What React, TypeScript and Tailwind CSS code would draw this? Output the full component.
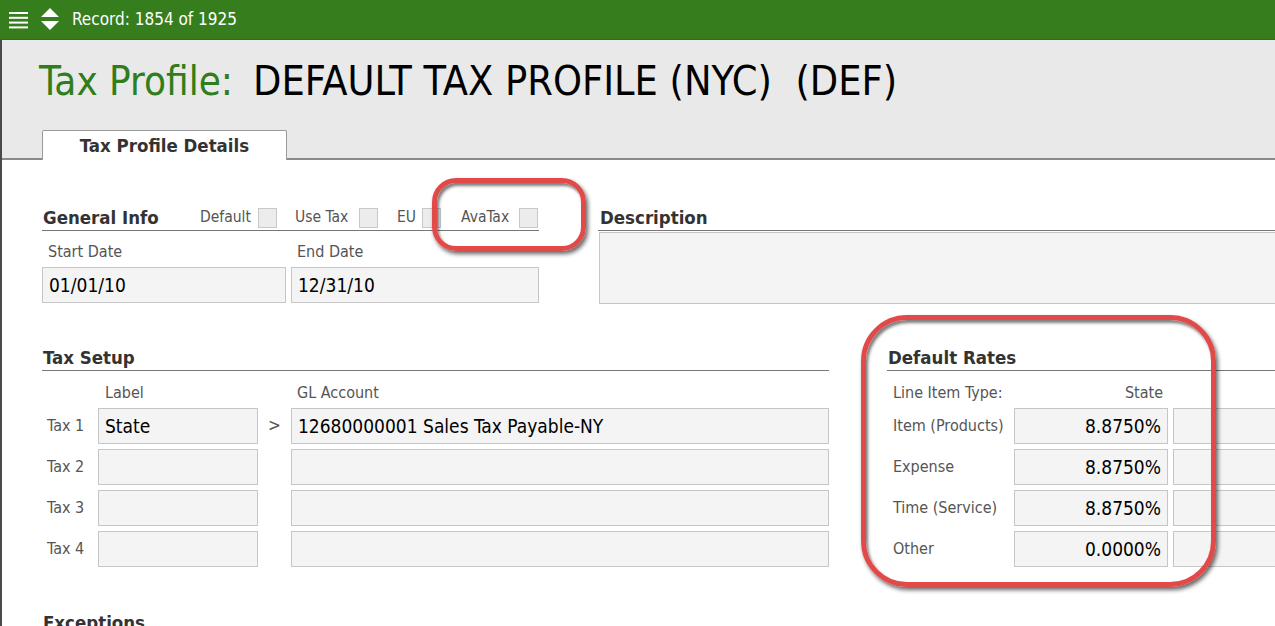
import React from "react";

const FONT = { fontFamily: '"DejaVu Sans Condensed", "DejaVu Sans", Tahoma, sans-serif' };

/* ── small pieces ─────────────────────────────────────────── */

function Field({ w, value, right }: { w: string; value?: string; right?: boolean }) {
  return (
    <div
      className={`${w} h-[36px] shrink-0 border border-[#c6c6c6] bg-[#f4f4f4] flex items-center px-[6px] text-[19px] text-black ${
        right ? "justify-end" : ""
      }`}
    >
      {value}
    </div>
  );
}

function Check({ label, w, className = "" }: { label: string; w: string; className?: string }) {
  return (
    <div className={`flex items-center gap-[7px] text-[15.5px] text-[#555] ${className}`}>
      <span className={`${w} whitespace-nowrap`}>{label}</span>
      <span className="w-[19px] h-[20px] border border-[#c8c8c8] bg-[#ececec]" />
    </div>
  );
}

function Heading({ children, className = "" }: { children: React.ReactNode; className?: string }) {
  return (
    <div className={`h-[26px] flex items-center border-b border-[#777] text-[18.5px] font-bold text-[#333] ${className}`}>
      {children}
    </div>
  );
}

function Callout({ className }: { className: string }) {
  return (
    <div
      className={`absolute pointer-events-none border-[5px] border-[#e24a4a] shadow-[2px_3px_4px_rgba(0,0,0,0.6),inset_2px_3px_3px_rgba(0,0,0,0.5)] ${className}`}
    />
  );
}

const TAXES = [
  { name: "Tax 1", label: "State", gl: "12680000001 Sales Tax Payable-NY" },
  { name: "Tax 2", label: "", gl: "" },
  { name: "Tax 3", label: "", gl: "" },
  { name: "Tax 4", label: "", gl: "" },
];

const RATES = [
  { type: "Item (Products)", v: "8.8750%" },
  { type: "Expense", v: "8.8750%" },
  { type: "Time (Service)", v: "8.8750%" },
  { type: "Other", v: "0.0000%" },
];

export default function App() {
  return (
    <div className="relative w-[1275px] h-[626px] overflow-hidden bg-white" style={FONT}>
      {/* top bar */}
      <div className="h-[40px] bg-[#367d1e] border-b border-[#2e6c19] flex items-center text-white">
        <svg width="20" height="18" viewBox="0 0 20 18" className="ml-[9px]">
          <g fill="#fff">
            <rect x="0" y="1" width="19" height="2" />
            <rect x="0" y="5.8" width="19" height="2" />
            <rect x="0" y="10.6" width="19" height="2" />
            <rect x="0" y="15.4" width="19" height="2" />
          </g>
        </svg>
        <svg width="18" height="24" viewBox="0 0 18 24" className="ml-[12px]">
          <path d="M9 0 L18 9 L0 9 Z M0 13 L18 13 L9 22 Z" fill="#fff" />
        </svg>
        <span className="ml-[13px] text-[17px]">Record: 1854 of 1925</span>
      </div>

      <div className="border-l-2 border-[#4a4a4a] h-full">
        {/* title band */}
        <div className="bg-[#e9e9e9] border-b-2 border-[#8a8a8a] h-[120px] flex flex-col">
          <div className="mt-[16px] h-[50px] pl-[37px] flex items-center gap-[20px] text-[40px] leading-none whitespace-pre">
            <span className="text-[#2f7d1b]">Tax Profile:</span>
            <span className="text-black text-[41px]">DEFAULT TAX PROFILE (NYC)  (DEF)</span>
          </div>
          <div className="mt-auto ml-[40px] -mb-[2px] w-[245px] h-[30px] bg-white border border-b-0 border-[#9a9a9a] rounded-t-[2px] flex items-center justify-center text-[18.5px] font-bold text-[#333]">
            Tax Profile Details
          </div>
        </div>

        {/* body */}
        <div className="pl-[40px] pt-[45px]">
          {/* general info + description */}
          <div className="flex gap-[59px]">
            <div className="w-[497px] shrink-0">
              <Heading>
                <span className="w-[158px] pl-[1px]">General Info</span>
                <div className="flex items-center font-normal">
                  <Check label="Default" w="w-[51px]" />
                  <Check label="Use Tax" w="w-[57px]" className="ml-[18px]" />
                  <Check label="EU" w="w-[18px]" className="ml-[19px]" />
                  <Check label="AvaTax" w="w-[51px]" className="ml-[20px]" />
                </div>
              </Heading>
              <div className="flex gap-[5px]">
                <div>
                  <div className="h-[36px] flex items-end pb-[3px] pl-[6px] text-[16px] text-[#555]">Start Date</div>
                  <Field w="w-[244px]" value="01/01/10" />
                </div>
                <div>
                  <div className="h-[36px] flex items-end pb-[3px] pl-[6px] text-[16px] text-[#555]">End Date</div>
                  <Field w="w-[248px]" value="12/31/10" />
                </div>
              </div>
            </div>
            <div className="w-[700px] shrink-0">
              <Heading className="pl-[2px]">Description</Heading>
              <div className="mt-[1px] ml-[1px] h-[72px] border border-[#c6c6c6] bg-[#f4f4f4]" />
            </div>
          </div>

          {/* tax setup + default rates */}
          <div className="flex gap-[58px] mt-[41px]">
            <div className="w-[787px] shrink-0">
              <Heading className="pl-[1px]">Tax Setup</Heading>
              <div className="h-[37px] flex items-end pb-[3px] text-[16px] text-[#555]">
                <span className="w-[63px]" />
                <span className="w-[192px]">Label</span>
                <span>GL Account</span>
              </div>
              <div className="flex flex-col gap-[5px]">
                {TAXES.map((t) => (
                  <div key={t.name} className="flex items-center">
                    <span className="w-[56px] pl-[5px] text-[16px] text-[#555]">{t.name}</span>
                    <Field w="w-[160px]" value={t.label} />
                    <span className="w-[33px] text-center text-[17px] text-[#555]">{t.label ? ">" : ""}</span>
                    <Field w="w-[538px]" value={t.gl} />
                  </div>
                ))}
              </div>
            </div>
            <div className="w-[500px] shrink-0">
              <Heading className="pl-[1px]">Default Rates</Heading>
              <div className="h-[37px] flex items-end pb-[3px] text-[16px] text-[#555]">
                <span className="w-[127px] pl-[6px]">Line Item Type:</span>
                <span className="w-[149px] text-right">State</span>
              </div>
              <div className="flex flex-col gap-[5px]">
                {RATES.map((r) => (
                  <div key={r.type} className="flex items-center">
                    <span className="w-[127px] pl-[6px] text-[16px] text-[#555]">{r.type}</span>
                    <Field w="w-[154px]" value={r.v} right />
                    <div className="ml-[5px]">
                      <Field w="w-[150px]" />
                    </div>
                  </div>
                ))}
              </div>
            </div>
          </div>

          {/* exceptions */}
          <div className="mt-[43px] w-[787px]">
            <Heading className="pl-[1px]">Exceptions</Heading>
          </div>
        </div>
      </div>

      {/* annotations */}
      <Callout className="left-[432px] top-[178px] w-[154px] h-[73px] rounded-[24px]" />
      <Callout className="left-[861px] top-[315px] w-[355px] h-[272px] rounded-[46px]" />
    </div>
  );
}
